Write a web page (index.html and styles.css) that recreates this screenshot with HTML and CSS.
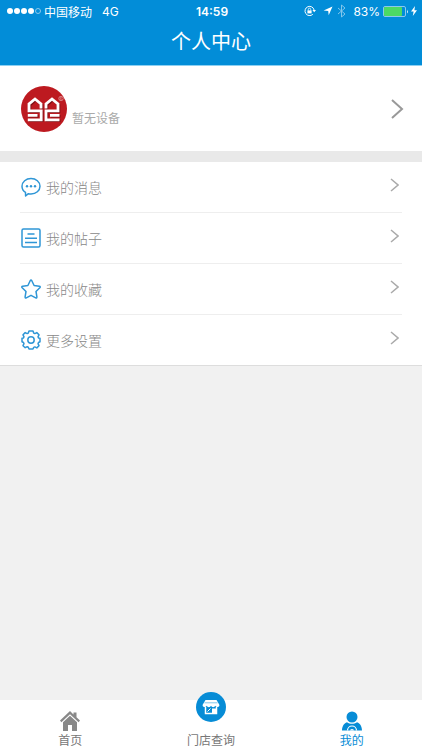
FILE: index.html
```html
<!DOCTYPE html>
<html lang="zh-CN">
<head>
  <meta charset="UTF-8">
  <meta name="viewport" content="width=device-width, initial-scale=1.0">
  <title>个人中心</title>
  <link rel="stylesheet" href="styles.css">
</head>
<body>
  <!-- 顶部 -->
  <header class="header">
    <div class="status">
      <div class="status-left">
        <div class="signal"><i></i><i></i><i></i><i></i><i class="off"></i></div>
        <span>中国移动</span>
        <span class="network">4G</span>
      </div>
      <span class="time">14:59</span>
      <div class="status-right">
        <svg width="12" height="12" viewBox="0 0 12 12" fill="none" stroke="#fff">
          <path d="M8.800 9.300A4.600 4.600 0 1 1 10.100 5"/>
          <path d="M8.400 5h3.600l-1.800 2.200z" fill="#fff" stroke="none"/>
          <path d="M3.400 5.400h4.200v3H3.400z" fill="#fff" stroke="none"/>
          <path d="M4.300 5.600V4.400a1.200 1.200 0 0 1 2.400 0v1.200" stroke-width=".8"/>
        </svg>
        <svg class="location" width="10" height="10" viewBox="0 0 10 10" fill="#fff"><path d="M9.500.5L5.700 9.300 5.200 5 .6 4.600z"/></svg>
        <svg class="bluetooth" width="9" height="14" viewBox="0 0 9 14" fill="none" stroke="#fff"><path d="M1 4l7 6-3.500 3V1L8 4l-7 6"/></svg>
        <span class="percent">83%</span>
        <svg width="26" height="11" viewBox="0 0 26 11">
          <rect x=".5" y=".5" width="22" height="10" rx="1.500" fill="none" stroke="#8cc8ec"/>
          <rect x="1" y="1" width="18" height="9" rx="1" fill="#4cd964"/>
          <path d="M24 3.500q1.500 2 0 4z" fill="#fff"/>
        </svg>
        <svg class="bolt" width="6" height="10" viewBox="0 0 6 10" fill="#fff"><path d="M4 0L0 5.600h2.600L1.800 10 6 4.200H3.400z"/></svg>
      </div>
    </div>
    <h1>个人中心</h1>
  </header>

  <main class="content">
    <!-- 用户信息 -->
    <a class="profile" href="#">
      <svg class="avatar" width="46" height="46" viewBox="0 0 46 46">
        <circle cx="23" cy="23" r="23" fill="#bd1a20"/>
        <g fill="none" stroke="#7d1014" stroke-width="2.600" transform="translate(1 1)">
          <path d="M20 22.500V18l-6-5-6 5v6.800h12.200v9H6.800M16.500 29.300H6.800"/>
          <path d="M25 22.500V18l6-5 6 5v6.800H25v9h13.500M29 29.300h9.500"/>
        </g>
        <g fill="none" stroke="#fff" stroke-width="2.800">
          <path d="M20 22.500V18l-6-5-6 5v6.800h12.200v9H6.800M16.500 29.300H6.800"/>
          <path d="M25 22.500V18l6-5 6 5v6.800H25v9h13.500M29 29.300h9.500"/>
        </g>
        <circle cx="40" cy="12.500" r="2.200" fill="none" stroke="#e6a3a5" stroke-width=".7"/>
        <path d="M39.300 14v-2.800h1q.8.8-.2 1.400l.8 1.300" fill="none" stroke="#e6a3a5" stroke-width=".5"/>
      </svg>
      <span class="device">暂无设备</span>
      <svg class="arrow" width="14" height="22" viewBox="0 0 14 22"><path d="M2 2l10 9-10 9"/></svg>
    </a>

    <!-- 菜单 -->
    <nav class="menu">
      <a href="#">
        <svg class="icon" width="20" height="20" viewBox="0 0 20 20">
          <path d="M4.500 15.400C2.200 14 1 11.800 1 9.300 1 4.900 5 1.500 10 1.500s9 3.400 9 7.800-4 7.700-9 7.700c-1 0-1.800-.1-2.600-.3L4.600 19z"/>
          <g class="fill"><circle cx="6" cy="9.300" r="1.200"/><circle cx="10" cy="9.300" r="1.200"/><circle cx="14" cy="9.300" r="1.200"/></g>
        </svg>
        <span>我的消息</span>
        <svg class="arrow" width="9" height="14" viewBox="0 0 9 14"><path d="M1 1l7 6-7 6"/></svg>
      </a>
      <a href="#">
        <svg class="icon" width="20" height="20" viewBox="0 0 20 20">
          <rect x="1" y="1" width="18" height="18" rx="1.500"/>
          <path d="M6.500 6h7M4 10.300h12M4 14.600h12"/>
        </svg>
        <span>我的帖子</span>
        <svg class="arrow" width="9" height="14" viewBox="0 0 9 14"><path d="M1 1l7 6-7 6"/></svg>
      </a>
      <a href="#">
        <svg class="icon" width="20" height="20" viewBox="0 0 20 20">
          <path d="M9.200 1.700q.8-1.300 1.600 0l2.300 4.800 5.200.8q1.500.3.500 1.500l-3.800 3.700.9 5.300q.1 1.500-1.200 1L10 16.300l-4.700 2.500q-1.300.5-1.200-1l.9-5.300-3.800-3.700q-1-1.200.5-1.500l5.200-.8z"/>
        </svg>
        <span>我的收藏</span>
        <svg class="arrow" width="9" height="14" viewBox="0 0 9 14"><path d="M1 1l7 6-7 6"/></svg>
      </a>
      <a href="#">
        <svg class="icon" width="20" height="20" viewBox="0 0 20 20">
          <path d="M8 1h4l.7 2.100 1.100.5 2-1 2.200 2.200-1 2 .5 1.200L19 8.200v3.600l-1.500.7-.5 1.200 1 2-2.200 2.200-2-1-1.100.5L12 19H8l-.7-1.800-1.100-.5-2 1L2 15.700l1-2-.5-1.200-1.500-.7V8.200L2.500 8 3 6.800l-1-2 2.200-2.200 2 1 1.100-.5z"/>
          <circle cx="10" cy="10" r="3.200"/>
        </svg>
        <span>更多设置</span>
        <svg class="arrow" width="9" height="14" viewBox="0 0 9 14"><path d="M1 1l7 6-7 6"/></svg>
      </a>
    </nav>
  </main>

  <!-- 底部导航 -->
  <nav class="tabbar">
    <a href="#">
      <svg width="20" height="20" viewBox="0 0 20 20" fill="#888">
        <path d="M10 0l3.500 3.400V1.600h3v4.600L20 9.600l-1.400 1.600L10 3.200l-8.600 8L0 9.600z"/>
        <path d="M10 4.700l7 6.500V20h-5v-6H8v6H3v-8.800z"/>
      </svg>
      <span>首页</span>
    </a>
    <a href="#">
      <svg class="store" width="30" height="30" viewBox="0 0 30 30">
        <circle cx="15" cy="15" r="15" fill="#078cd6"/>
        <path d="M9.500 8h11l3 5a2.200 2.200 0 0 1-4.200.8 2.300 2.300 0 0 1-4.300 0 2.300 2.300 0 0 1-4.300 0 2.200 2.200 0 0 1-4.200-.8z" fill="#fff"/>
        <path d="M9.500 15v6.500h11V15" fill="none" stroke="#fff" stroke-width="1.500"/>
        <path d="M16 16.500h4.500v5H16z" fill="#fff"/>
        <path d="M11.500 19.500l3-3" stroke="#fff"/>
        <path d="M8.500 10.800h13" stroke="#078cd6" stroke-width=".5"/>
      </svg>
      <span>门店查询</span>
    </a>
    <a class="active" href="#">
      <svg width="20" height="20" viewBox="0 0 20 20" fill="#078cd6">
        <circle cx="10" cy="6" r="5.500"/>
        <path d="M0 19.500c0-4 1.800-7.300 5-8.300 3 2 7 2 10 0 3.200 1 5 4.300 5 8.300z"/>
        <path d="M5.500 19.500a4.500 4.500 0 0 1 9 0" fill="none" stroke="#fff" stroke-width="1.200"/>
        <path d="M8 19.500a2 1.500 0 0 1 4 0z" fill="#fff"/>
      </svg>
      <span>我的</span>
    </a>
  </nav>
</body>
</html>
```

FILE: styles.css
```css
* {
  box-sizing: border-box;
  margin: 0;
  padding: 0;
}
body {
  font-family: Inter, "Noto Sans CJK SC", sans-serif;
  background-color: #f1f1f1;
  display: flex;
  flex-direction: column;
  min-height: 100vh;
}
a {
  color: inherit;
  text-decoration: none;
}
svg {
  display: block;
  flex-shrink: 0;
}
/* 顶部 */
.header {
  background-color: #028dd8;
  color: #fff;
  border-bottom: 1px solid #8dd0f2;
}
.status {
  display: grid;
  grid-template-columns: 1fr auto 1fr;
  align-items: center;
  height: 22px;
  padding: 0 5px 0 7px;
  font-size: 12px;
}
.status-left,
.status-right {
  display: flex;
  align-items: center;
}
.status-right {
  justify-content: flex-end;
}
.signal {
  display: flex;
  gap: 1px;
  margin-right: 3px;
}
.signal i {
  width: 6px;
  height: 6px;
  border-radius: 50%;
  background-color: #fff;
}
.signal .off {
  background: none;
  border: 1px solid #8cc8ec;
}
.network {
  margin-left: 10px;
}
.time {
  font-weight: 600;
}
.location {
  margin-left: 7px;
}
.bluetooth {
  margin: 0 7px 0 4px;
  opacity: 0.5;
}
.percent {
  margin-right: 3px;
}
.bolt {
  margin-left: 2px;
}
.header h1 {
  padding-bottom: 3px;
  font-size: 20px;
  font-weight: 400;
  line-height: 40px;
  text-align: center;
}
/* 主体 */
.content {
  flex: 1;
}
.arrow {
  fill: none;
  stroke: #aaa;
  stroke-width: 1.5;
  margin-left: auto;
}
.profile {
  display: flex;
  align-items: center;
  height: 96px;
  padding: 0 18px 0 21px;
  background-color: #fff;
  border-bottom: 11px solid #e9e9e9;
}
.profile .arrow {
  stroke: #999;
  stroke-width: 2;
}
.device {
  margin: 20px 0 0 5px;
  font-size: 12px;
  line-height: 18px;
  color: #aaa;
}
.menu {
  background-color: #fff;
  padding: 0 20px;
  border-bottom: 1px solid #ddd;
}
.menu a {
  display: flex;
  align-items: center;
  height: 51px;
  padding: 0 3px 0 1px;
  border-bottom: 1px solid #eee;
  font-size: 14px;
  font-weight: 300;
  color: #888;
}
.menu a:last-child {
  height: 50px;
  border-bottom: none;
}
.menu span {
  margin-left: 5px;
}
.menu .arrow {
  margin-bottom: 4px;
}
.icon {
  fill: none;
  stroke: #2f96d6;
  stroke-width: 1.5;
  stroke-linejoin: round;
}
.icon .fill {
  fill: #2f96d6;
  stroke: none;
}
/* 底部导航 */
.tabbar {
  display: grid;
  grid-template-columns: repeat(3, 1fr);
  grid-template-rows: 50px;
  background-color: #fff;
}
.tabbar a {
  display: flex;
  flex-direction: column;
  align-items: center;
  justify-content: flex-end;
  gap: 1px;
  font-size: 12px;
  line-height: 18px;
  color: #777;
}
/* 圆形图标超出底栏上沿 */
.tabbar .store {
  margin-bottom: 9px;
}
.tabbar .active {
  color: #078cd6;
}
```
